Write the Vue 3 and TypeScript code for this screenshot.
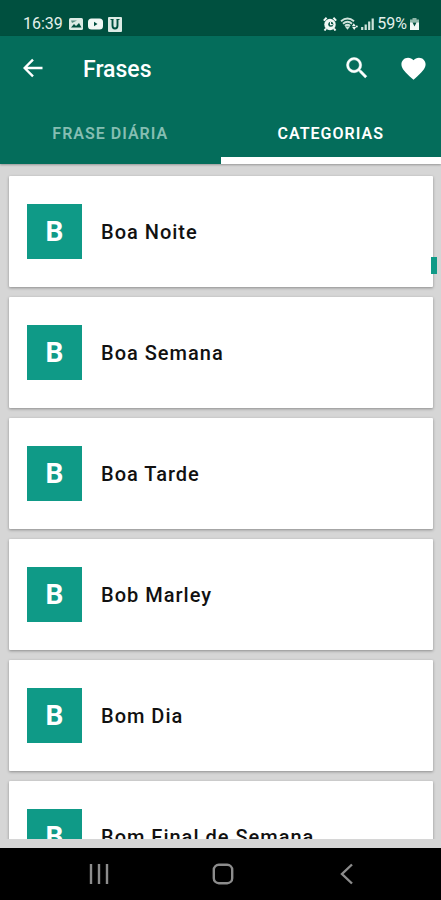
<script setup lang="ts">
import { ref } from 'vue'

interface Category {
  id: number
  name: string
}

const tabs: string[] = ['Frase diária', 'Categorias']
const activeTab = ref<number>(1)

const categories: Category[] = [
  { id: 1, name: 'Boa Noite' },
  { id: 2, name: 'Boa Semana' },
  { id: 3, name: 'Boa Tarde' },
  { id: 4, name: 'Bob Marley' },
  { id: 5, name: 'Bom Dia' },
  { id: 6, name: 'Bom Final de Semana' },
]
</script>

<template>
  <div class="screen">
    <div class="status">
      <div class="status-group">
        <span class="clock">16:39</span>
        <svg width="14" height="14" viewBox="0 0 14 14" aria-hidden="true">
          <rect x="0" y="1" width="14" height="12" rx="1.500" fill="#dcebe5" />
          <path d="M2 10.500 5 7l2 2 3-3 2.500 4.500z" fill="#00503f" />
          <path d="M2 3.500h6L3 6z" fill="#00503f" opacity=".6" />
        </svg>
        <svg width="15" height="14" viewBox="0 0 15 14" aria-hidden="true">
          <rect x="0" y="1.500" width="15" height="11" rx="3.500" fill="#f1f8f5" />
          <path d="M6 4.800v4.400L9.500 7z" fill="#00503f" />
        </svg>
        <svg width="14" height="15" viewBox="0 0 14 15" aria-hidden="true">
          <rect width="14" height="15" rx="1" fill="#dcebe5" />
          <path d="M4.500 2.500v6q0 3 2.500 3t2.500-3v-6" fill="none" stroke="#00503f" stroke-width="1.900" />
          <path d="M2.500 2.500h3M8.500 2.500h3" stroke="#00503f" stroke-width="1" />
        </svg>
      </div>
      <div class="status-group right">
        <svg width="14" height="14" viewBox="0 0 14 14" aria-hidden="true">
          <circle cx="7" cy="7.500" r="5.700" fill="#f1f8f5" />
          <path d="M.8 3.600 3.600.8M13.200 3.600 10.400.8M3 11.500 1.500 13.500M11 11.500l1.500 2" stroke="#f1f8f5" stroke-width="2" />
          <circle cx="7.800" cy="7.300" r="2.500" fill="#00503f" />
          <path d="M7.500 5v2.700h2.200" fill="none" stroke="#f1f8f5" stroke-width="1.200" />
        </svg>
        <svg width="18" height="14" viewBox="0 0 18 14" aria-hidden="true">
          <path d="M1 4.200q6.500-5.400 13 0M3 6.700q4.500-3.800 9 0M5 9q2.500-2.200 5 0" fill="none" stroke="#cfe3db" stroke-width="2" />
          <path d="m7.500 12.800-2.600-3.200h5.200z" fill="#cfe3db" />
          <path d="m11.800 9.200 2-2.900 2 2.900zM12.200 10l2 2.900 2-2.900z" fill="#f1f8f5" />
          <circle cx="16.800" cy="9.600" r="1" fill="#f1f8f5" />
        </svg>
        <svg width="13" height="14" viewBox="0 0 13 14" aria-hidden="true">
          <path d="M1.200 10v3M4.700 7.500V13M8.200 4.500V13M11.700 1.500V13" stroke="#cfe3db" stroke-width="2.200" />
        </svg>
        <span class="battery-level">59%</span>
        <svg width="9" height="14" viewBox="0 0 9 14" aria-hidden="true">
          <path d="M2.500 1h4v1.500H9V13H0V2.500h2.500z" fill="#8fb8aa" />
          <path d="M0 5.500h9V13H0z" fill="#f1f8f5" />
          <path d="M2.500 5.500h4L4.500 9.500z" fill="#00503f" />
        </svg>
      </div>
    </div>

    <header class="top">
      <div class="app-bar">
        <button class="icon-button" type="button" aria-label="Voltar">
          <svg width="20" height="20" viewBox="0 0 20 20">
            <path d="M19.500 10H1.800M10 1.600 1.600 10l8.400 8.400" fill="none" stroke="#fff" stroke-width="2.400" />
          </svg>
        </button>
        <h1>Frases</h1>
        <button class="icon-button" type="button" aria-label="Pesquisar">
          <svg width="28" height="28" viewBox="0 0 24 24">
            <path fill="#fff" stroke="#fff" stroke-width=".4" d="M15.500 14h-.79l-.28-.27A6.471 6.471 0 0 0 16 9.500 6.500 6.500 0 1 0 9.500 16c1.610 0 3.090-.59 4.230-1.570l.27.28v.79l5 4.990L20.490 19l-4.990-5zm-6 0C7.010 14 5 11.990 5 9.500S7.010 5 9.500 5 14 7.010 14 9.500 11.990 14 9.500 14z" />
          </svg>
        </button>
        <button class="icon-button" type="button" aria-label="Favoritos">
          <svg width="29" height="29" viewBox="0 0 24 24">
            <path fill="#fff" d="m12 21.350-1.450-1.320C5.400 15.360 2 12.280 2 8.500 2 5.420 4.420 3 7.500 3c1.740 0 3.410.81 4.500 2.090C13.090 3.810 14.760 3 16.500 3 19.580 3 22 5.420 22 8.500c0 3.780-3.400 6.860-8.550 11.540L12 21.350z" />
          </svg>
        </button>
      </div>
      <div class="tabs" role="tablist">
        <button
          v-for="(tab, index) in tabs"
          :key="tab"
          class="tab"
          :class="{ active: index === activeTab }"
          type="button"
          role="tab"
          :aria-selected="index === activeTab"
          @click="activeTab = index"
        >
          {{ tab }}
        </button>
      </div>
    </header>

    <main class="content">
      <ul class="list">
        <li v-for="category in categories" :key="category.id" class="card">
          <span class="badge" aria-hidden="true">{{ category.name.charAt(0) }}</span>
          <span class="name">{{ category.name }}</span>
        </li>
      </ul>
      <div class="scroll-thumb"></div>
    </main>

    <nav class="system-nav">
      <button class="nav-button" type="button" aria-label="Recentes">
        <svg width="22" height="22" viewBox="0 0 22 22">
          <path d="M3 1v20M11 1v20M19 1v20" stroke="#8c8c8c" stroke-width="2.400" />
        </svg>
      </button>
      <button class="nav-button" type="button" aria-label="Início">
        <svg width="22" height="22" viewBox="0 0 22 22">
          <rect x="1.800" y="1.800" width="18.400" height="18.400" rx="5" fill="none" stroke="#8c8c8c" stroke-width="2.400" />
        </svg>
      </button>
      <button class="nav-button" type="button" aria-label="Voltar">
        <svg width="22" height="22" viewBox="0 0 22 22">
          <path d="M16 1.500 6 11l10 9.500" fill="none" stroke="#8c8c8c" stroke-width="2.400" />
        </svg>
      </button>
    </nav>
  </div>
</template>

<style>
body {
  margin: 0;
  background: #d6d6d6;
}
</style>

<style scoped>
.screen {
  display: flex;
  flex-direction: column;
  height: 100vh;
  overflow: hidden;
  background: #d6d6d6;
  font-family: Roboto, "Liberation Sans", sans-serif;
}

button {
  margin: 0;
  padding: 0;
  border: 0;
  background: none;
  font-family: inherit;
  cursor: pointer;
}

svg {
  display: block;
  flex: none;
}

.status {
  display: flex;
  flex: none;
  justify-content: space-between;
  align-items: flex-end;
  box-sizing: border-box;
  height: 36px;
  padding: 0 22px 4px 23px;
  background: #00503f;
  color: #e4f0eb;
}

.status-group {
  display: flex;
  align-items: center;
  gap: 5px;
  height: 16px;
  font-size: 16px;
  line-height: 18px;
}

.status-group.right {
  gap: 3px;
}

.clock {
  margin-right: 1px;
}

.top {
  flex: none;
  background: #046d5b;
  box-shadow: 0 1px 2px rgba(0, 0, 0, 0.3);
}

.app-bar {
  display: flex;
  align-items: center;
  height: 64px;
  padding: 0 0 0 5px;
}

.icon-button {
  display: flex;
  flex: none;
  align-items: center;
  justify-content: center;
  width: 56px;
  height: 56px;
}

h1 {
  flex: 1;
  margin: 0;
  padding: 3px 0 0 22px;
  color: #fff;
  font-size: 23px;
  font-weight: 500;
  line-height: 28px;
}

.tabs {
  display: grid;
  grid-template-columns: 1fr 1fr;
}

.tab {
  height: 64px;
  padding-top: 10px;
  border-bottom: 7px solid transparent;
  color: #86beb2;
  font-size: 16px;
  font-weight: 600;
  line-height: 20px;
  letter-spacing: 1px;
  text-transform: uppercase;
}

.tab.active {
  border-bottom-color: #fff;
  color: #fff;
}

.content {
  position: relative;
  display: flex;
  flex: 1;
  min-height: 0;
  padding-bottom: 9px;
}

.list {
  display: flex;
  flex: 1;
  flex-direction: column;
  gap: 10px;
  margin: 0;
  padding: 12px 8px 0 9px;
  overflow: hidden;
  list-style: none;
}

.card {
  display: flex;
  flex: none;
  align-items: center;
  gap: 19px;
  box-sizing: border-box;
  height: 111px;
  padding: 0 18px;
  border-radius: 1px;
  background: #fff;
  box-shadow: 0 1px 3px rgba(0, 0, 0, 0.35);
}

.badge {
  display: flex;
  align-items: center;
  justify-content: center;
  width: 55px;
  height: 55px;
  background: #0f9a87;
  color: #fff;
  font-size: 28px;
  font-weight: 700;
}

.name {
  color: #111;
  font-size: 20px;
  font-weight: 500;
  line-height: 24px;
  letter-spacing: 1px;
}

.scroll-thumb {
  position: absolute;
  top: 93px;
  right: 4px;
  width: 6px;
  height: 17px;
  background: #0f9a87;
}

.system-nav {
  display: grid;
  flex: none;
  grid-template-columns: repeat(3, 1fr);
  height: 52px;
  padding: 0 32px 0 37px;
  background: #000;
}

.nav-button {
  display: flex;
  align-items: center;
  justify-content: center;
}
</style>
